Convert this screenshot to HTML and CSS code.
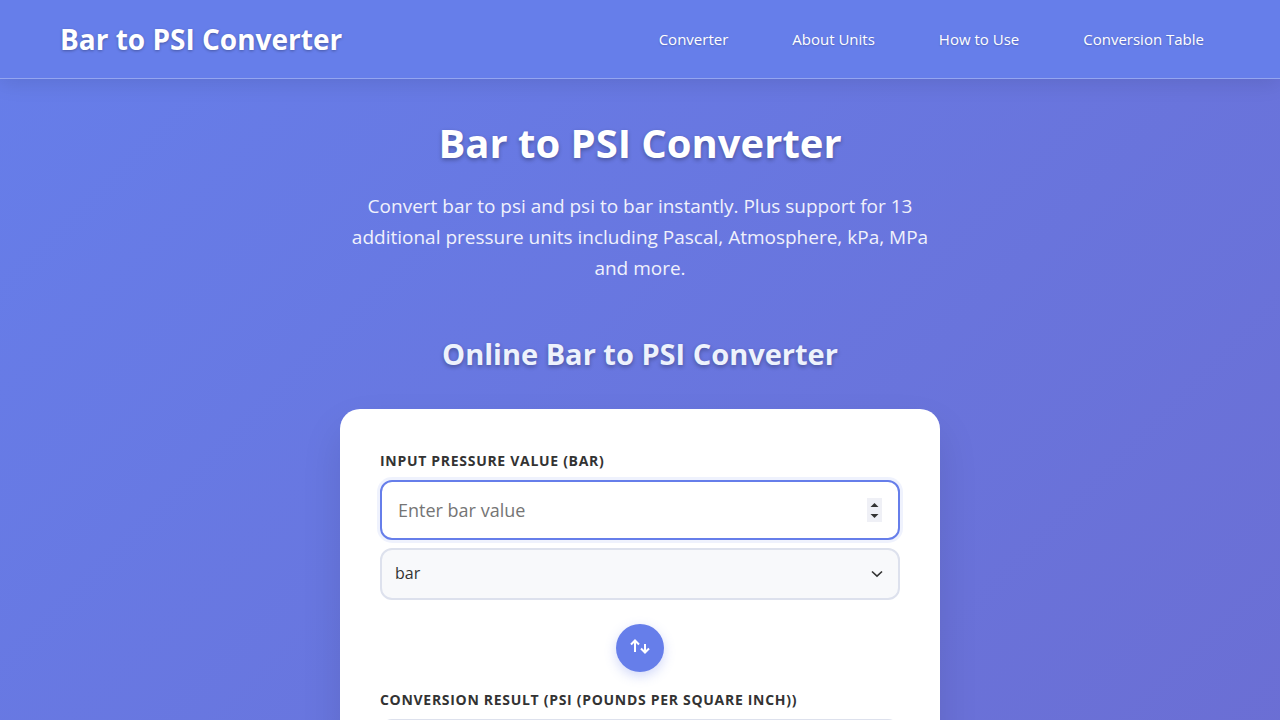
FILE: index.html
```html
<!DOCTYPE html>
<html lang="en">
<head>
<meta charset="utf-8">
<meta name="viewport" content="width=device-width, initial-scale=1">
<title>Bar to PSI Converter</title>
<link rel="stylesheet" href="styles.css">
</head>
<body>
<header class="header">
  <div class="header-inner">
    <div class="logo">Bar to PSI Converter</div>
    <nav class="nav">
      <a href="#converter">Converter</a>
      <a href="#about">About Units</a>
      <a href="#how">How to Use</a>
      <a href="#table">Conversion Table</a>
    </nav>
  </div>
</header>
<main class="main">
  <section class="hero">
    <h1>Bar to PSI Converter</h1>
    <p>Convert bar to psi and psi to bar instantly. Plus support for 13 additional pressure units including Pascal, Atmosphere, kPa, MPa and more.</p>
  </section>
  <section class="converter" id="converter">
    <h2>Online Bar to PSI Converter</h2>
    <form class="card">
      <label class="label" for="value">Input Pressure Value (bar)</label>
      <div class="control">
        <input class="field" id="value" type="number" placeholder="Enter bar value">
        <svg class="stepper" width="15" height="24" viewBox="0 0 15 24"><rect width="15" height="24" fill="#eff0f6"/><path d="M3.500 9L7.500 5L11.500 9ZM3.500 16L7.500 20L11.500 16Z" fill="#333"/></svg>
      </div>
      <div class="control">
        <select class="unit" aria-label="Input unit"><option>bar</option><option>psi</option></select>
        <svg class="chevron" width="12" height="8" viewBox="0 0 12 8" fill="none" stroke="currentColor" stroke-width="1.6"><path d="M1 1.500L6 6.200L11 1.500"/></svg>
      </div>
      <button class="swap" type="button" aria-label="Swap units">
        <svg width="20" height="20" viewBox="0 0 20 20" fill="none" stroke="currentColor" stroke-width="2"><path d="M5 14V3M1 6.500L5 2.500L9 6.500M15 6V14M11 10.500L15 14.500L19 10.500"/></svg>
      </button>
      <label class="label" for="result">Conversion Result (psi (Pounds per Square Inch))</label>
      <div class="control">
        <input class="field" id="result" type="text" readonly>
      </div>
    </form>
  </section>
</main>
</body>
</html>
```
FILE: styles.css
```css
* { box-sizing: border-box; margin: 0; padding: 0; }
html { height: 100%; overflow: hidden; }
body {
  height: 100%;
  overflow: hidden;
  font-family: "Open Sans", "Noto Sans", sans-serif;
  line-height: 1.6;
  color: #333;
  background: linear-gradient(135deg, #667eea 0%, #764ba2 330%);
}
.header {
  background: #667eea;
  border-bottom: 1px solid rgba(255, 255, 255, 0.3);
  box-shadow: 0 4px 20px rgba(0, 0, 0, 0.1);
}
.header-inner {
  max-width: 1200px;
  margin: 0 auto;
  padding: 16px 20px;
  display: flex;
  justify-content: space-between;
  align-items: center;
}
.logo { font-size: 28px; line-height: 46px; font-weight: 700; color: #fff; text-shadow: 0 1px 3px rgba(0, 0, 0, 0.3); }
.nav { display: flex; gap: 32px; }
.nav a { padding: 8px 16px; font-size: 15px; color: #fff; text-decoration: none; text-shadow: 0 1px 2px rgba(0, 0, 0, 0.2); }
.main { padding: 40px 20px; }
.hero { max-width: 600px; margin: 0 auto; text-align: center; color: #fff; }
.hero h1 { font-size: 40px; line-height: 48px; font-weight: 700; text-shadow: 0 2px 4px rgba(0, 0, 0, 0.3); }
.hero p { margin-top: 24px; font-size: 19px; line-height: 31px; opacity: 0.9; }
.converter { max-width: 600px; margin: 47px auto 0; }
.converter h2 { text-align: center; font-size: 29px; line-height: 46px; color: #edf2fc; text-shadow: 0 2px 4px rgba(0, 0, 0, 0.3); }
.card {
  margin-top: 32px;
  padding: 40px;
  display: flex;
  flex-direction: column;
  background: #fff;
  border-radius: 20px;
  box-shadow: 0 20px 40px rgba(0, 0, 0, 0.1);
}
.label { font-size: 14px; line-height: 23px; font-weight: 700; text-transform: uppercase; letter-spacing: 0.05em; color: #333; }
.control { display: grid; align-items: center; margin-top: 8px; }
.control > * { grid-area: 1 / 1; }
.field { width: 100%; height: 60px; padding: 16px; border: 2px solid #dde1ed; border-radius: 12px; font: inherit; font-size: 18px; color: #333; background: #fff; }
.field:focus, #value { outline: none; border-color: #667eea; box-shadow: 0 0 0 3px rgba(102, 126, 234, 0.1); }
.field::-webkit-inner-spin-button { opacity: 0; }
.stepper { justify-self: end; margin-right: 18px; pointer-events: none; }
.unit { appearance: none; height: 52px; padding: 0 13px; border: 2px solid #dde1ed; border-radius: 12px; font: inherit; font-size: 16px; color: #333; background: #f8f9fb; }
.chevron { justify-self: end; margin-right: 17px; color: #333; pointer-events: none; }
.swap { align-self: center; width: 48px; height: 48px; margin: 24px 0 16px; display: grid; place-items: center; border: 0; border-radius: 50%; color: #fff; background: #667eea; box-shadow: 0 4px 12px rgba(102, 126, 234, 0.3); }
```
